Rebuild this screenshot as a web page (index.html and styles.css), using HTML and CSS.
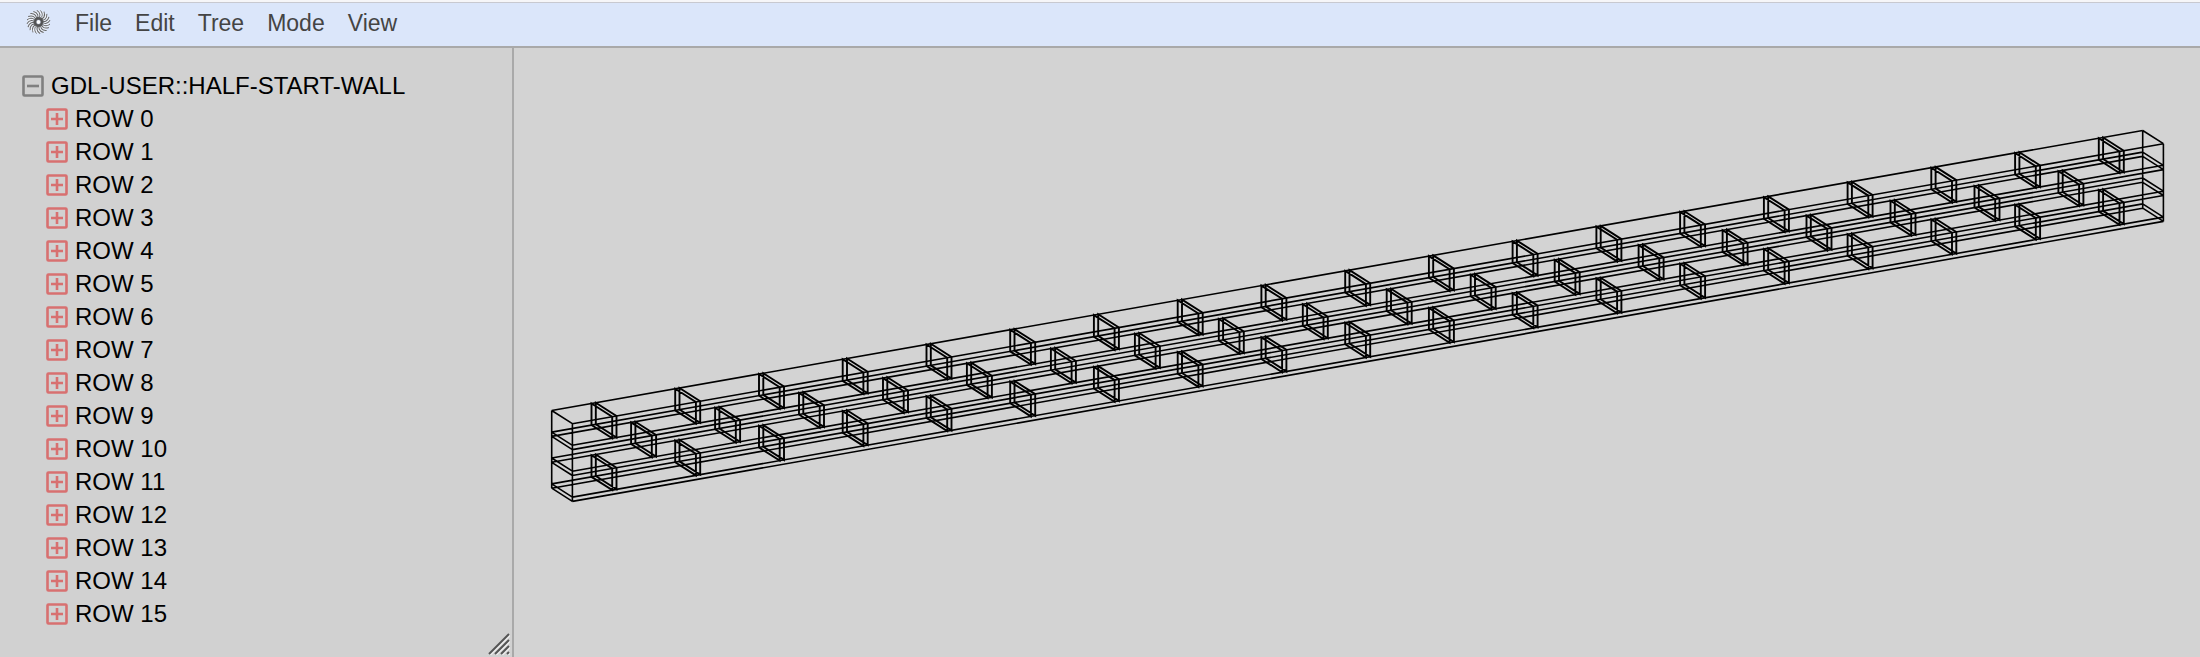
FILE: index.html
```html
<!DOCTYPE html>
<html lang="en">
<head>
<meta charset="utf-8">
<title>Half Start Wall</title>
<link rel="stylesheet" href="styles.css">
</head>
<body>
<header class="menubar">
  <svg class="logo" viewBox="-12 -12 24 24" aria-hidden="true"><circle r="8" class="logo-back"/><g id="petals"></g><circle r="3.5" class="logo-core"/><circle r="1.7" class="logo-eye"/></svg>
  <nav class="menu">
    <button type="button">File</button>
    <button type="button">Edit</button>
    <button type="button">Tree</button>
    <button type="button">Mode</button>
    <button type="button">View</button>
  </nav>
</header>
<main class="workspace">
  <aside class="tree-panel">
    <div class="tree-row root">
      <button type="button" class="toggle" aria-label="Collapse"><svg viewBox="0 0 22 22"><rect x="1.5" y="1.5" width="19" height="19" rx="1"/><path d="M5 11H17"/></svg></button>
      <span>GDL-USER::HALF-START-WALL</span>
    </div>
    <ul class="rows" id="rows"></ul>
    <svg class="grip" viewBox="0 0 22 22" aria-hidden="true"><path class="grip-light" d="M2 22L22 2M8 22L22 8M14 22L22 14M20 22L22 20"/><path d="M1 21L21 1M7 21L21 7M13 21L21 13M19 21L21 19"/></svg>
  </aside>
  <section class="viewport"><svg class="wall" viewBox="514 48 1686 609" role="img" aria-label="Wireframe of a brick wall"><path id="courses"/><path id="joints" class="joints"/></svg></section>
</main>
<script src="wall.js"></script>
</body>
</html>
```
FILE: styles.css
```css
* { box-sizing: border-box; }
body {
  margin: 0;
  height: 100vh;
  display: flex;
  flex-direction: column;
  background: #d3d3d3;
  color: #000;
  font: 24px/33px "Liberation Sans", Arial, sans-serif;
}
button {
  font: inherit;
  color: inherit;
  padding: 0;
  border: 0;
  background: none;
}
.menubar {
  display: flex;
  align-items: center;
  flex: none;
  height: 48px;
  padding: 0 0 2px 26px;
  gap: 24px;
  background: #dbe6fa;
  border-top: 2px solid #f6f6f8;
  border-bottom: 2px solid #a9a9a9;
  box-shadow: inset 0 1px #c8c9d0;
  color: #444;
  font-size: 23px;
}
.logo { width: 25px; height: 24px; margin-bottom: 2px; }
.logo path { fill: none; stroke: #666; stroke-width: 1; }
.logo-back { fill: none; stroke: #fff; stroke-width: 6; opacity: .5; }
.logo-core { fill: none; stroke: #444; stroke-width: 3; opacity: .7; }
.logo-eye { fill: #fff; }
.menu { display: flex; gap: 23px; }
.workspace { display: flex; flex: 1; min-height: 0; }
.tree-panel {
  position: relative;
  flex: none;
  width: 514px;
  padding: 21px 22px 0;
  background: #d1d1d1;
  border-right: 2px solid #a9a9a9;
}
.tree-row { display: flex; align-items: center; gap: 7px; height: 33px; }
.toggle { width: 22px; height: 22px; color: #808080; }
.toggle svg { display: block; fill: none; stroke: currentColor; stroke-width: 2.6; }
.rows { margin: 0; padding: 0 0 0 24px; list-style: none; }
.rows .toggle { color: #d87070; }
.grip { position: absolute; right: 2px; bottom: 2px; width: 22px; height: 22px; fill: none; stroke: #555; stroke-width: 2; }
.grip-light { stroke: #eee; }
.viewport { flex: 1; min-width: 0; }
.wall { display: block; width: 100%; height: 100%; }
.wall path { fill: none; stroke: #000; stroke-width: 1.6; }
.wall .joints { stroke-width: 1.9; }
```
FILE: wall.js
```js
const rows = document.getElementById('rows');
for (let i = 0; i < 16; i++) {
  const li = document.createElement('li');
  li.className = 'tree-row';
  li.innerHTML = '<button type="button" class="toggle" aria-label="Expand"><svg viewBox="0 0 22 22"><rect x="1.5" y="1.5" width="19" height="19" rx="1"/><path d="M5 11H17M11 5V17"/></svg></button><span>ROW ' + i + '</span>';
  rows.append(li);
}

let petals = '';
for (let a = 0; a < 360; a += 18) {
  petals += `<path transform="rotate(${a})" d="M0 -3C4 -4 5 -8 2 -11.5"/>`;
}
document.getElementById('petals').innerHTML = petals;

// Isometric projection: x runs along the wall, depth towards the viewer, z down.
const slope = 280 / 1591, length = 1591, depth = [20.7, 13.2];
const brick = 21.6, mortar = 4.3, period = brick + mortar;
const point = (x, front, z) => [551.7 + x + front * depth[0], 410.5 - x * slope + front * depth[1] + z].map(v => v.toFixed(1)).join(' ');
let courses = '', joints = '';
const line = (a, b) => { courses += `M${a}L${b}`; };
for (let r = 0; r < 3; r++) {
  for (const z of [r * period, r * period + brick]) {
    for (const f of [0, 1]) line(point(0, f, z), point(length, f, z));
    for (const x of [0, length]) line(point(x, 0, z), point(x, 1, z));
  }
  const first = r === 1 ? 79.4 : 39.8;
  const count = r === 1 ? 18 : 19;
  const pitch = r === 1 ? 83.96 : 83.74;
  for (let i = 0; i < count; i++) {
    for (const x of [first + i * pitch, first + mortar + i * pitch]) {
      const z = r * period;
      joints += `M${point(x, 0, z)}L${point(x, 1, z)}L${point(x, 1, z + brick)}L${point(x, 0, z + brick)}Z`;
    }
  }
}
const bottom = 3 * period;
for (const f of [0, 1]) {
  line(point(0, f, bottom), point(length, f, bottom));
  for (const x of [0, length]) line(point(x, f, 0), point(x, f, bottom));
}
for (const x of [0, length]) line(point(x, 0, bottom), point(x, 1, bottom));
document.getElementById('courses').setAttribute('d', courses);
document.getElementById('joints').setAttribute('d', joints);
```
